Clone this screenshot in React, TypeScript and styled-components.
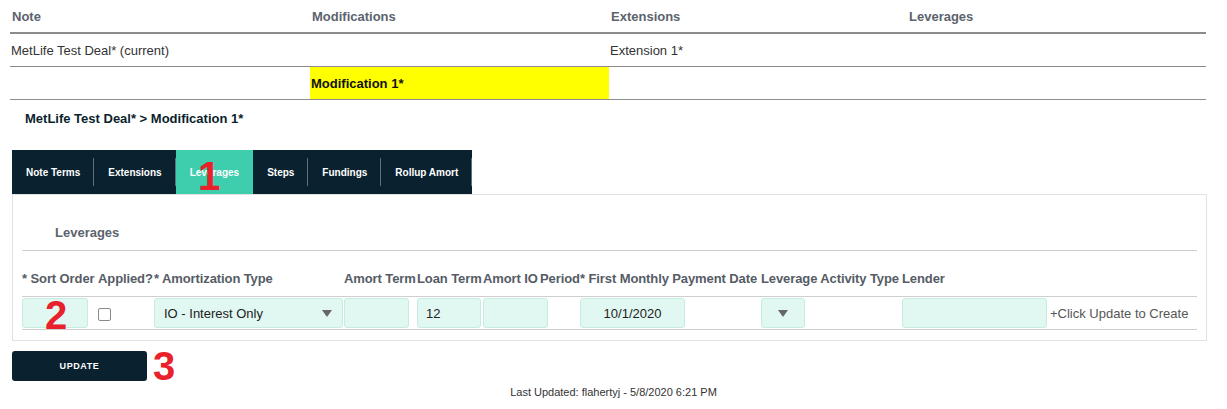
import React from 'react';
import styled, {createGlobalStyle} from 'styled-components';

const GlobalStyle = createGlobalStyle`
  body {
    margin: 0;
    background: #fff;
    font-family: "Liberation Sans", Arial, sans-serif;
    color: #333;
  }
`

const Page = styled.div`
  position: relative;
  width: 1227px;
  height: 409px;
  overflow: hidden;
`

const NoteTable = styled.div`
  margin-left: 10px;
  width: 1196px;
`
const NoteRow = styled.div<{ $head?: boolean }>`
  display: grid;
  grid-template-columns: 300px 299px 298px 1fr;
  height: 32px;
  border-bottom: ${p => p.$head ? '2px' : '1px'} solid #8c8c8c;
`
const NoteCell = styled.div<{ $head?: boolean, $hl?: boolean }>`
  display: flex;
  align-items: center;
  padding-left: ${p => p.$head ? '2px' : '1px'};
  font-size: 13px;
  font-weight: ${p => p.$head || p.$hl ? 'bold' : 'normal'};
  color: ${p => p.$head ? '#5b636d' : p.$hl ? '#111' : '#333'};
  background: ${p => p.$hl ? '#ffff00' : 'transparent'};
`

const Breadcrumb = styled.div`
  margin: 11px 0 0 25px;
  line-height: 16px;
  font-size: 13px;
  font-weight: bold;
  color: #0b1f2c;
`

const Section = styled.div`
  position: relative;
  margin: 23px 0 0 12px;
  width: 1195px;
`

const TabBar = styled.div`
  display: inline-flex;
  height: 44px;
  background: #0a2230;
  vertical-align: top;
`
const Tab = styled.div<{ $active?: boolean }>`
  position: relative;
  display: flex;
  align-items: center;
  padding: 0 14px;
  font-size: 10px;
  font-weight: bold;
  color: #fff;
  background: ${p => p.$active ? '#3ecdad' : 'transparent'};

  &::after {
    content: "";
    position: absolute;
    right: 0;
    top: 8px;
    bottom: 8px;
    width: 1px;
    background: ${p => p.$active ? 'transparent' : '#5a6f7f'};
  }
`

const Panel = styled.div`
  border: 1px solid #e2e2e2;
  padding: 30px 9px 10px 9px;
`
const PanelTitle = styled.div`
  padding: 0 0 9px 33px;
  line-height: 16px;
  font-size: 13px;
  font-weight: bold;
  color: #5b636d;
  border-bottom: 1px solid #cfcfcf;
`

// column edges follow the inputs: 22 | 98 | 154 | 344 | 417 | 483 | 540 | 580 | 761 | 902 | 1048
const cols = '76px 56px 190px 73px 66px 57px 40px 181px 141px 146px 1fr';

const HeadRow = styled.div`
  display: grid;
  grid-template-columns: ${cols};
  padding: 20px 0 9px;
  border-bottom: 1px solid #cfcfcf;
`
const HeadCell = styled.div`
  line-height: 16px;
  font-size: 13px;
  font-weight: bold;
  color: #555c65;
  white-space: nowrap;
  letter-spacing: -0.1px;
`
const DataRow = styled.div`
  display: grid;
  grid-template-columns: ${cols};
  align-items: center;
  padding: 1px 0;
  border-bottom: 1px solid #cfcfcf;
`
const DataCell = styled.div`
  min-width: 0;
  display: flex;
  align-items: center;
  height: 30px;
`
const Field = styled.div<{ $w: number, $center?: boolean }>`
  box-sizing: border-box;
  flex: none;
  width: ${p => p.$w}px;
  height: 30px;
  display: flex;
  align-items: center;
  justify-content: ${p => p.$center ? 'center' : 'flex-start'};
  padding: 0 8px;
  background: #e1f7f1;
  border: 1px solid #c6ece0;
  border-radius: 3px;
  font-size: 13px;
  color: #222;
`
const Select = styled(Field)`
  justify-content: ${p => p.$center ? 'center' : 'space-between'};
  padding: 0 10px 0 9px;
`
const Arrow = styled.span`
  width: 0;
  height: 0;
  border-left: 5px solid transparent;
  border-right: 5px solid transparent;
  border-top: 7px solid #666;
`
const Check = styled.div`
  width: 11px;
  height: 11px;
  margin-top: 2px;
  border: 1px solid #8a8a8a;
  border-radius: 2px;
  background: #fff;
`
const CreateNote = styled.span`
  margin-left: 2px;
  font-size: 13px;
  color: #555;
  white-space: nowrap;
`

const UpdateButton = styled.button`
  display: block;
  margin-top: 10px;
  width: 135px;
  height: 30px;
  border: none;
  border-radius: 3px;
  background: #0a2230;
  color: #fff;
  font-family: "Liberation Sans", Arial, sans-serif;
  font-size: 9px;
  font-weight: bold;
  letter-spacing: 0.6px;
`

const Footer = styled.div`
  margin-top: 4px;
  text-align: center;
  line-height: 14px;
  font-size: 11px;
  color: #333;
`

const Marker = styled.div<{ $x: number, $y: number }>`
  position: absolute;
  left: ${p => p.$x}px;
  top: ${p => p.$y}px;
  font-family: "Liberation Sans Narrow", "Liberation Sans", Arial, sans-serif;
  font-weight: bold;
  font-size: 40px;
  line-height: 40px;
  color: #e8212b;
`

const noteHead = ['Note', 'Modifications', 'Extensions', 'Leverages'];
const tabs = ['Note Terms', 'Extensions', 'Leverages', 'Steps', 'Fundings', 'Rollup Amort'];
const levHead = ['* Sort Order', 'Applied?', '* Amortization Type', 'Amort Term', 'Loan Term', 'Amort IO',
    'Period', '* First Monthly Payment Date', 'Leverage Activity Type', 'Lender', ''];

const App = () => {
    return (
        <Page>
            <GlobalStyle/>
            <NoteTable>
                <NoteRow $head>
                    {noteHead.map(h => <NoteCell key={h} $head>{h}</NoteCell>)}
                </NoteRow>
                <NoteRow>
                    <NoteCell>MetLife Test Deal* (current)</NoteCell>
                    <NoteCell/>
                    <NoteCell>Extension 1*</NoteCell>
                    <NoteCell/>
                </NoteRow>
                <NoteRow>
                    <NoteCell/>
                    <NoteCell $hl>Modification 1*</NoteCell>
                    <NoteCell/>
                    <NoteCell/>
                </NoteRow>
            </NoteTable>

            <Breadcrumb>MetLife Test Deal* &gt; Modification 1*</Breadcrumb>

            <Section>
                <TabBar>
                    {tabs.map(t => <Tab key={t} $active={t === 'Leverages'}>{t}</Tab>)}
                </TabBar>
                <Panel>
                    <PanelTitle>Leverages</PanelTitle>
                    <HeadRow>
                        {levHead.map((h, i) => <HeadCell key={i}>{h}</HeadCell>)}
                    </HeadRow>
                    <DataRow>
                        <DataCell><Field $w={66}/></DataCell>
                        <DataCell><Check/></DataCell>
                        <DataCell><Select $w={189}>IO - Interest Only<Arrow/></Select></DataCell>
                        <DataCell><Field $w={65}/></DataCell>
                        <DataCell><Field $w={64}>12</Field></DataCell>
                        <DataCell><Field $w={65}/></DataCell>
                        <DataCell/>
                        <DataCell><Field $w={105} $center>10/1/2020</Field></DataCell>
                        <DataCell><Select $w={44} $center><Arrow/></Select></DataCell>
                        <DataCell><Field $w={145}/></DataCell>
                        <DataCell><CreateNote>+Click Update to Create</CreateNote></DataCell>
                    </DataRow>
                </Panel>
                <UpdateButton>UPDATE</UpdateButton>
                <Marker $x={186} $y={6}>1</Marker>
                <Marker $x={33} $y={145}>2</Marker>
                <Marker $x={141} $y={196}>3</Marker>
            </Section>

            <Footer>Last Updated: flahertyj - 5/8/2020 6:21 PM</Footer>
        </Page>
    );
};

export default App;
